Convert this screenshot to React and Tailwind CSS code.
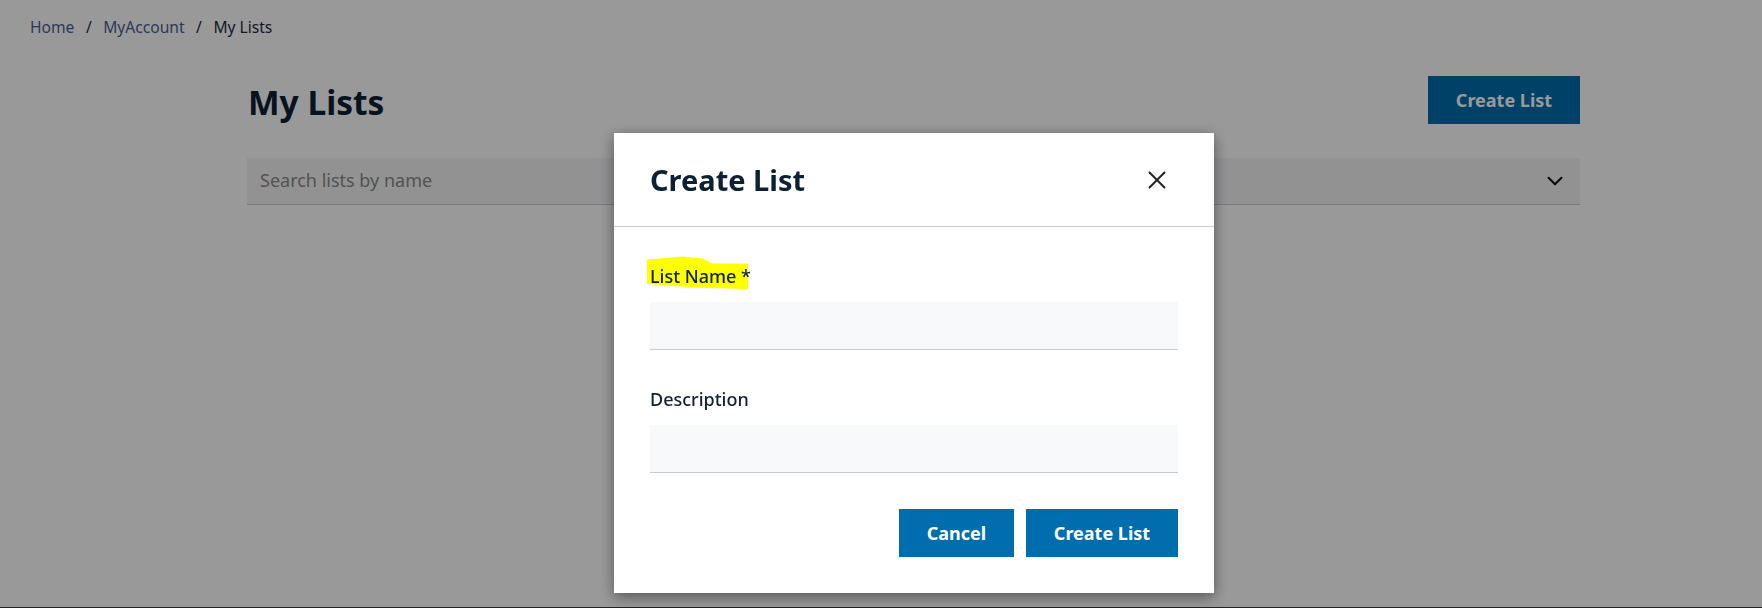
import React from "react";
import { X, ChevronDown } from "lucide-react";

function Field({ label, highlight }) {
  return (
    <div className="flex flex-col">
      <label className="relative h-[27px] text-[18px] leading-[27px] font-medium text-[#0c2234]">
        {highlight && (
          <svg className="absolute left-[-4px] top-[-9px]" width="104" height="36" viewBox="0 0 104 36">
            <path d="M1 5.5 L37 2.5 L57 4.5 L66 9.5 L102 9.5 L102 35 L61 34 L27 32 L1 30 Z" fill="#ffff00" />
          </svg>
        )}
        <span className="relative">{label}</span>
      </label>
      <input className="mt-[12px] h-[48px] w-full bg-[#f8f9fb] border-b border-[#c9cccf] outline-none" />
    </div>
  );
}

export default function App() {
  return (
    <div className="h-[608px] w-full bg-white overflow-hidden font-['Noto_Sans',sans-serif]">
      <nav className="flex items-center h-[27px] mt-[14px] pl-[30px] text-[15.6px] text-[#1e2a3a]">
        <a className="text-[#4a5f96]">Home</a>
        <span className="mx-[11.5px]">/</span>
        <a className="text-[#4a5f96]">MyAccount</a>
        <span className="mx-[11.5px]">/</span>
        <span>My Lists</span>
      </nav>

      <main className="ml-[247px] w-[1333px]">
        <div className="flex items-center justify-between mt-[35px] h-[48px]">
          <h1 className="text-[33.5px] font-bold text-[#0c2234] pl-[1px] pt-[4px]">My Lists</h1>
          <button className="h-[48px] w-[152px] bg-[#006dae] text-white text-[18px] font-bold">
            Create List
          </button>
        </div>
        <div className="flex items-center justify-between mt-[34px] h-[47px] bg-[#f3f4f6] border-b border-[#c9cccf] pl-[13px] pr-[12px]">
          <span className="text-[18px] text-[#8a8a8a] -mt-[2px]">Search lists by name</span>
          <ChevronDown size={26} strokeWidth={1.9} className="text-[#111]" />
        </div>
      </main>

      <div className="fixed inset-0 bg-black/40">
        <div className="mt-[133px] ml-[614px] w-[600px] h-[460px] bg-white shadow-[0_4px_14px_rgba(0,0,0,0.45)]">
          <div className="flex items-center justify-between h-[94px] border-b border-[#c9cccf] pl-[36px] pr-[42px]">
            <h2 className="text-[29px] font-bold text-[#0c2234]">Create List</h2>
            <X size={30} strokeWidth={1.6} className="text-[#222]" />
          </div>
          <div className="flex flex-col gap-[36px] pt-[36px] px-[36px]">
            <Field label="List Name *" highlight />
            <Field label="Description" />
          </div>
          <div className="flex justify-end gap-[12px] mt-[36px] pr-[36px]">
            <button className="h-[48px] w-[115px] bg-[#006dae] text-white text-[18px] font-bold">
              Cancel
            </button>
            <button className="h-[48px] w-[152px] bg-[#006dae] text-white text-[18px] font-bold">
              Create List
            </button>
          </div>
        </div>
      </div>
      <div className="fixed left-0 right-0 bottom-0 h-px bg-[#222]" />
    </div>
  );
}
